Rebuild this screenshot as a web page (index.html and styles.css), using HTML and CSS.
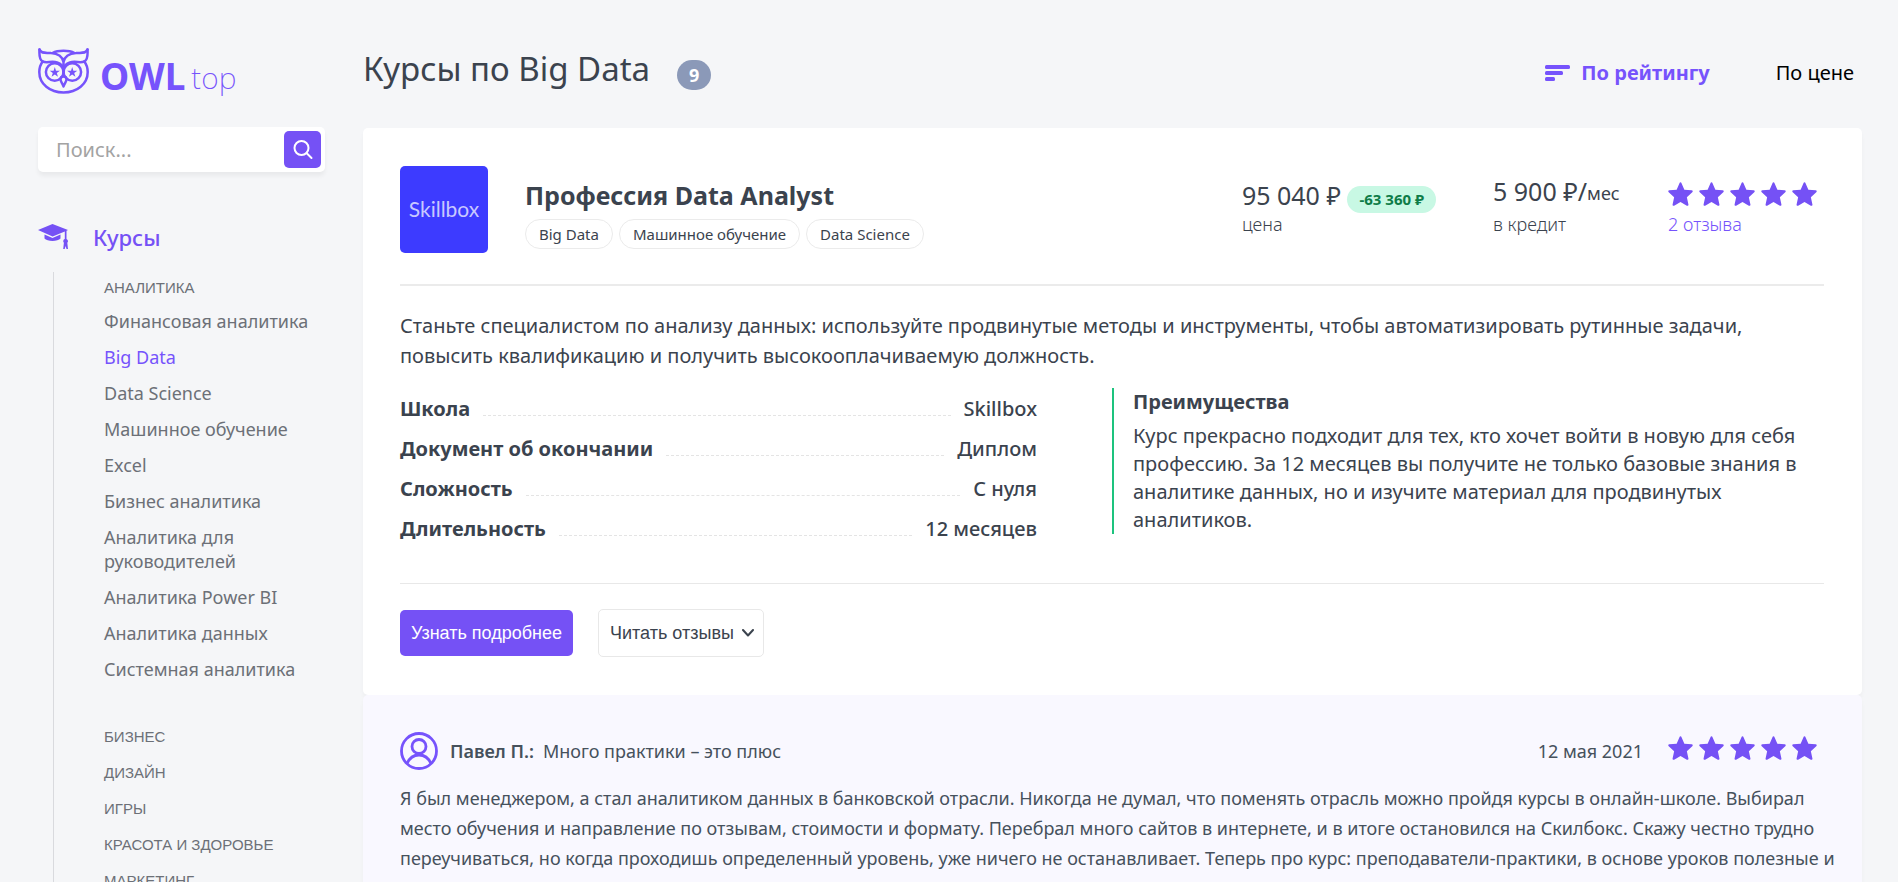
FILE: index.html
```html
<!DOCTYPE html>
<html lang="ru">
<head>
<meta charset="utf-8">
<title>Курсы по Big Data</title>
<link rel="stylesheet" href="styles.css">
</head>
<body>
<svg class="sprite">
  <symbol id="star" viewBox="0 0 24 24"><path d="M12 0.8c.5 0 .8.3 1 .8l2.700 6.300 7 .6c1.100.1 1.400 1.100.6 1.900l-5.200 4.700 1.500 7c.2 1-.6 1.600-1.500 1.100L12 19.600l-6.100 3.600c-.9.5-1.700-.1-1.500-1.100l1.500-7L.7 10.400C-.1 9.600.2 8.600 1.300 8.500l7-.6L11 1.600c.2-.5.5-.8 1-.8z"/></symbol>
</svg>
<div class="page">
  <aside class="sidebar">
    <a class="logo" href="#" aria-label="OWL top">
      <svg class="logo-owl" viewBox="0 0 51 46" fill="none" stroke="currentColor" stroke-width="2.500" stroke-linecap="round" stroke-linejoin="round">
        <path d="M4.700 13.500C2 17 1.300 20 1.300 24c0 12 10.700 20.500 24.200 20.500S49.700 36 49.700 24c0-4-.7-7-3.400-10.500"/>
        <path d="M1.500 1.500C1.200 6 1.500 12 4.700 13.500 9 15.500 14 12.500 19 14.500c4 1.500 6 3.500 6.500 6.500.5-3 2.500-5 6.500-6.500 5-2 10 1 14.300-1 3.200-1.500 3.500-7.500 3.200-12"/>
        <path d="M1.500 1.500C3 6 8 4.500 13 5c7 .5 11.500 4 12.500 9C26.500 9 31 5.500 38 5c5-.5 10 1 11.500-3.500M14.500 5C20 2 31 2 36.500 5M25.500 14v14"/>
        <circle cx="16.700" cy="24" r="8.800"/><circle cx="34.300" cy="24" r="8.800"/>
        <path fill="#f5f6f8" d="M25.500 28.500c-2 0-3 1.500-3 3 0 2 2 3.500 3 7 1-3.500 3-5 3-7 0-1.500-1-3-3-3z"/>
        <path fill="currentColor" stroke="none" d="M16.800 19l1.200 3.700h3.900l-3.100 2.300 1.200 3.700-3.200-2.300-3.200 2.300 1.200-3.700-3.100-2.300h3.900zM34.200 19l1.200 3.700h3.900l-3.100 2.300 1.200 3.700-3.200-2.300-3.200 2.300 1.200-3.700-3.100-2.300h3.900z"/>
      </svg>
      <span class="logo-name">OWL</span><span class="logo-suffix">top</span>
    </a>
    <form class="search">
      <input class="search-input" type="text" placeholder="Поиск..." aria-label="Поиск">
      <button class="search-button" type="button" aria-label="Найти">
        <svg viewBox="0 0 20 20" fill="none" stroke="currentColor" stroke-width="2" stroke-linecap="round"><circle cx="8.500" cy="8" r="7"/><path d="M13.500 13l5 5"/></svg>
      </button>
    </form>
    <nav class="menu">
      <a class="menu-title" href="#">
        <svg viewBox="0 0 30 26" fill="currentColor"><path d="M0 6L14.500 0 30 6l-1.500.7V15a2.300 2.300 0 0 1 .8 3.800L30 25h-1.500l-.9-3-.9 3h-1.500l.7-6.200a2.300 2.300 0 0 1 .9-3.800V7.500l-12.200 5z"/><path d="M6.500 10.500l8 3.500 8-3.500v4c-2.500 3.300-13.500 3.300-16 0z"/></svg>
        Курсы
      </a>
      <div class="menu-body">
        <a class="menu-group" href="#">Аналитика</a>
        <ul class="menu-list">
          <li><a href="#">Финансовая аналитика</a></li>
          <li><a class="current" href="#">Big Data</a></li>
          <li><a href="#">Data Science</a></li>
          <li><a href="#">Машинное обучение</a></li>
          <li><a href="#">Excel</a></li>
          <li><a href="#">Бизнес аналитика</a></li>
          <li><a href="#">Аналитика для руководителей</a></li>
          <li><a href="#">Аналитика Power BI</a></li>
          <li><a href="#">Аналитика данных</a></li>
          <li><a href="#">Системная аналитика</a></li>
        </ul>
        <a class="menu-group" href="#">Бизнес</a>
        <a class="menu-group" href="#">Дизайн</a>
        <a class="menu-group" href="#">Игры</a>
        <a class="menu-group" href="#">Красота и здоровье</a>
        <a class="menu-group" href="#">Маркетинг</a>
      </div>
    </nav>
  </aside>
  <main class="content">
    <header class="heading">
      <h1>Курсы по Big Data</h1>
      <span class="count">9</span>
      <div class="sort">
        <button class="sort-button active" type="button">
          <svg viewBox="0 0 25 16" fill="currentColor"><rect width="25" height="4" rx="1.500"/><rect y="6" width="18" height="4" rx="1.500"/><rect y="12" width="10" height="4" rx="1.500"/></svg>
          По рейтингу
        </button>
        <button class="sort-button" type="button">По цене</button>
      </div>
    </header>
    <article class="card">
      <div class="summary">
        <div class="school-logo">Skillbox</div>
        <div class="summary-title">
          <h2>Профессия Data Analyst</h2>
          <div class="tags"><span class="tag">Big Data</span><span class="tag">Машинное обучение</span><span class="tag">Data Science</span></div>
        </div>
        <div class="price">
          <div class="value">95 040 ₽ <span class="discount">-63 360 ₽</span></div>
          <div class="caption">цена</div>
        </div>
        <div class="credit">
          <div class="value">5 900 ₽/<span class="month">мес</span></div>
          <div class="caption">в кредит</div>
        </div>
        <div class="rating">
          <div class="stars" role="img" aria-label="5 из 5"><svg><use href="#star"/></svg><svg><use href="#star"/></svg><svg><use href="#star"/></svg><svg><use href="#star"/></svg><svg><use href="#star"/></svg></div>
          <a class="caption" href="#reviews">2 отзыва</a>
        </div>
      </div>
      <p class="description">Станьте специалистом по анализу данных: используйте продвинутые методы и инструменты, чтобы автоматизировать рутинные задачи, повысить квалификацию и получить высокооплачиваемую должность.</p>
      <div class="details">
        <dl class="facts">
          <div class="fact"><dt>Школа</dt><dd>Skillbox</dd></div>
          <div class="fact"><dt>Документ об окончании</dt><dd>Диплом</dd></div>
          <div class="fact"><dt>Сложность</dt><dd>С нуля</dd></div>
          <div class="fact"><dt>Длительность</dt><dd>12 месяцев</dd></div>
        </dl>
        <section class="benefits">
          <h3>Преимущества</h3>
          <p>Курс прекрасно подходит для тех, кто хочет войти в новую для себя профессию. За 12 месяцев вы получите не только базовые знания в аналитике данных, но и изучите материал для продвинутых аналитиков.</p>
        </section>
      </div>
      <div class="actions">
        <button class="button primary" type="button">Узнать подробнее</button>
        <button class="button outline" type="button">Читать отзывы
          <svg viewBox="0 0 12 8" fill="none" stroke="currentColor" stroke-width="2" stroke-linecap="round" stroke-linejoin="round"><path d="M1 1l5 5.500L11 1"/></svg>
        </button>
      </div>
    </article>
    <section class="reviews" id="reviews">
      <header class="review-head">
        <svg class="avatar" viewBox="0 0 38 38" fill="none" stroke="currentColor" stroke-width="2.800"><circle cx="19" cy="19" r="17.500"/><circle cx="19" cy="14.500" r="7"/><path d="M7 31.500c2.500-5.500 6.500-8.500 12-8.500s9.500 3 12 8.500"/></svg>
        <b class="author">Павел П.:</b>
        <span class="review-title">Много практики – это плюс</span>
        <time datetime="2021-05-12">12 мая 2021</time>
        <div class="stars" role="img" aria-label="5 из 5"><svg><use href="#star"/></svg><svg><use href="#star"/></svg><svg><use href="#star"/></svg><svg><use href="#star"/></svg><svg><use href="#star"/></svg></div>
      </header>
      <p class="review-text">Я был менеджером, а стал аналитиком данных в банковской отрасли. Никогда не думал, что поменять отрасль можно пройдя курсы в онлайн-школе. Выбирал<br>место обучения и направление по отзывам, стоимости и формату. Перебрал много сайтов в интернете, и в итоге остановился на Скилбокс. Скажу честно трудно<br>переучиваться, но когда проходишь определенный уровень, уже ничего не останавливает. Теперь про курс: преподаватели-практики, в основе уроков полезные и</p>
    </section>
  </main>
</div>
</body>
</html>
```
FILE: styles.css
```css
* { box-sizing: border-box; }
html { height: 100%; overflow: hidden; }
body {
  height: 100%;
  margin: 0;
  overflow: hidden;
  background: #f5f6f8;
  color: #3b434e;
  font-family: "Noto Sans", "Liberation Sans", sans-serif;
  font-size: 20px;
}
h1, h2, h3, p, ul, dl, dd { margin: 0; padding: 0; }
a { color: inherit; text-decoration: none; }
button { font: inherit; color: inherit; border: 0; background: none; padding: 0; cursor: pointer; }
svg { display: block; }
.sprite { width: 0; height: 0; }

.page { display: grid; grid-template-columns: 287px minmax(0, 1fr); gap: 38px; padding: 0 36px 0 38px; }

.sidebar { padding-top: 48px; }
.logo { display: flex; align-items: flex-start; height: 79px; color: #7653fc; }
.logo-owl { width: 51px; height: 46px; margin-right: 11px; }
.logo-name { font-size: 37px; font-weight: 700; line-height: 56px; }
.logo-suffix { margin-left: 6px; font-size: 30px; font-weight: 200; line-height: 60px; }
.search { display: flex; align-items: center; height: 45px; padding-right: 4px; border-radius: 5px; background: #fff; box-shadow: 0 4px 4px rgba(0, 0, 0, .05); }
.search-input { flex: 1; min-width: 0; height: 45px; padding: 0 18px; border: 0; outline: 0; background: none; font: inherit; }
.search-input::placeholder { color: #a3a3a3; opacity: 1; }
.search-button { display: flex; align-items: center; justify-content: center; width: 37px; height: 37px; border-radius: 5px; background: #7551f5; color: #fff; }
.search-button svg { width: 20px; height: 20px; }

.menu { margin-top: 49px; }
.menu-title { display: flex; align-items: center; gap: 25px; height: 32px; color: #7551f5; font-size: 22px; font-weight: 500; }
.menu-title svg { width: 30px; height: 26px; }
.menu-body { margin: 19px 0 0 15px; padding-left: 50px; border-left: 1px solid #d9dade; }
.menu-group { display: block; height: 36px; padding-top: 6px; color: #6c7077; font-family: "Liberation Sans", Arial, sans-serif; font-size: 15px; line-height: 20px; text-transform: uppercase; }
.menu-list { padding: 1px 0 28px; color: #6c7077; font-size: 18px; line-height: 24px; list-style: none; }
.menu-list li { padding-bottom: 12px; }
.menu-list .current { color: #7653fc; }

.heading { display: flex; align-items: center; height: 128px; padding: 18px 8px 0 0; }
.heading h1 { margin-top: -8px; font-size: 33px; font-weight: 400; line-height: 44px; }
.count { margin: 4px 0 0 27px; padding: 0 12px; border-radius: 15px; background: #8b99b8; color: #fff; font-size: 18px; font-weight: 700; line-height: 30px; }
.sort { display: flex; gap: 66px; margin-left: auto; }
.sort-button { display: flex; align-items: center; gap: 11px; color: #000; line-height: 28px; }
.sort-button svg { width: 25px; height: 16px; }
.sort-button.active { color: #7653fc; font-weight: 700; }

.card { padding: 38px 38px 38px 37px; border-radius: 5px; background: #fff; box-shadow: 0 4px 4px rgba(0, 0, 0, .03); }
.summary { display: flex; align-items: flex-start; height: 120px; border-bottom: 2px solid #ebebeb; }
.school-logo { width: 88px; height: 87px; border-radius: 5px; background: #3d3bff; color: #c8c8ff; font-family: Lato, sans-serif; font-size: 21px; line-height: 85px; text-align: center; }
.summary-title { flex: 1; margin-left: 37px; padding-top: 11px; }
.summary h2 { font-size: 25px; font-weight: 700; line-height: 36px; }
.tags { display: flex; gap: 6px; margin-top: 6px; }
.tag { padding: 0 13px; border: 1px solid #ebebeb; border-radius: 15px; font-size: 15px; line-height: 28px; }
.price { padding-top: 14px; }
.credit { width: 175px; margin-left: 57px; padding-top: 10px; }
.credit .caption { margin-top: 4px; }
.rating { width: 156px; padding-top: 15px; }
.value { display: flex; align-items: center; height: 30px; font-size: 25px; font-weight: 400; white-space: pre; }
.month { padding-top: 4px; font-size: 18px; }
.discount { margin-top: 8px; padding: 0 12px; border-radius: 14px; background: #c8f8e4; color: #0e7c48; font-size: 15px; font-weight: 700; line-height: 27px; }
.caption { display: block; font-size: 18px; font-weight: 300; line-height: 28px; }
.rating .caption { color: #7653fc; }
.stars { display: flex; gap: 6px; height: 29px; color: #7551f5; }
.stars svg { width: 25px; height: 26px; fill: currentColor; }

.description { padding-top: 25px; line-height: 30px; }
.details { display: grid; grid-template-columns: 637px minmax(0, 1fr); align-items: start; gap: 75px; padding: 17px 0 35px; border-bottom: 1px solid #e8e8e8; }
.fact { display: flex; align-items: center; height: 40px; }
.fact::before { content: ""; order: 2; flex: 1; margin: 14px 13px 0; border-bottom: 1px dashed #e4e4e4; }
.fact dt { order: 1; font-weight: 700; }
.fact dd { order: 3; font-weight: 500; }
.benefits { padding-left: 19px; border-left: 2px solid #1dc37e; }
.benefits h3 { font-size: 20px; font-weight: 700; line-height: 28px; }
.benefits p { padding-top: 6px; line-height: 28px; }

.actions { display: flex; align-items: center; gap: 25px; padding-top: 25px; }
.button { display: flex; align-items: center; gap: 8px; border-radius: 5px; font-family: "Liberation Sans", Arial, sans-serif; font-size: 18px; }
.primary { height: 46px; padding: 0 11px; background: #7551f5; color: #fff; }
.outline { height: 48px; padding: 0 9px 0 11px; border: 1px solid #e8e8e8; }
.outline svg { width: 12px; height: 8px; }

.reviews { padding: 37px 38px 37px 37px; border-radius: 5px; background: #f9f8ff; box-shadow: 0 4px 4px rgba(0, 0, 0, .03); color: #46515c; font-size: 18px; }
.review-head { display: flex; align-items: center; height: 38px; }
.avatar { width: 38px; height: 38px; margin-right: 12px; color: #7653fc; }
.author { margin-right: 9px; font-weight: 600; }
.review-head time { margin-left: auto; margin-right: 25px; }
.review-head .stars { width: 156px; height: 32px; }
.review-text { margin-right: -24px; padding-top: 13px; line-height: 30px; }
```
